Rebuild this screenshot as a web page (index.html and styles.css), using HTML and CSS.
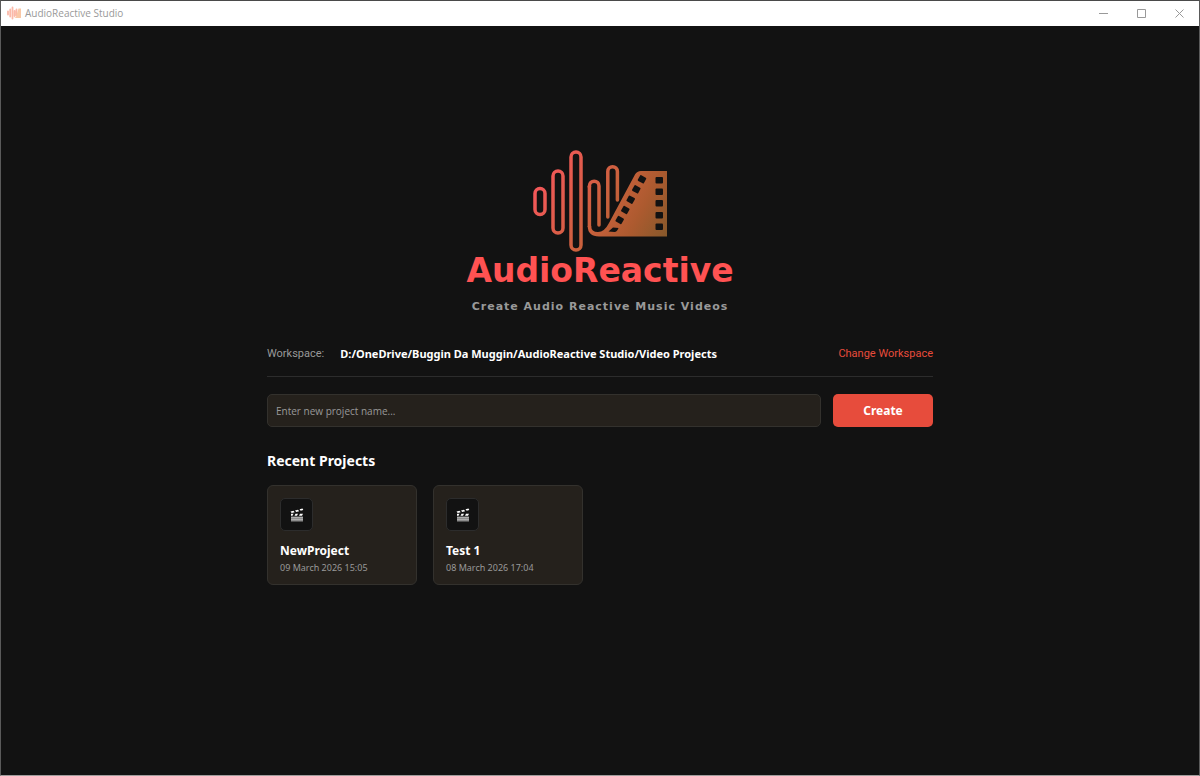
FILE: index.html
```html
<!DOCTYPE html>
<html lang="en">
  <head>
    <meta charset="utf-8" />
    <title>AudioReactive Studio</title>
    <link rel="stylesheet" href="styles.css" />
  </head>
  <body>
    <header class="titlebar">
      <svg class="app-icon" viewBox="0 0 14 14" aria-hidden="true">
        <path d="M1 5.500v3M3.200 3.500v7M5.500 1.500v11M7.600 5v5M9.500 3.500v6" stroke="#fbb9a8" stroke-width="1.800" stroke-linecap="round" />
        <path d="M7 12l2-1 2.500-8.500H14V12z" fill="#f9c8a6" />
      </svg>
      <span class="titlebar-text">AudioReactive Studio</span>
      <div class="window-buttons">
        <button type="button" aria-label="Minimize">
          <svg viewBox="0 0 9 9"><path d="M0 4.500h9" /></svg>
        </button>
        <button type="button" aria-label="Maximize">
          <svg viewBox="0 0 9 9"><path d="M.5 .5h8v8h-8z" /></svg>
        </button>
        <button type="button" aria-label="Close">
          <svg viewBox="0 0 9 9"><path d="M.5 .5l8 8M8.500 .5l-8 8" /></svg>
        </button>
      </div>
    </header>

    <main class="home">
      <div class="brand">
        <svg class="logo" viewBox="0 0 134 102" aria-hidden="true">
          <defs>
            <linearGradient id="flame" gradientUnits="userSpaceOnUse" x1="10" y1="20" x2="134" y2="88">
              <stop offset="0" stop-color="#f5575a" />
              <stop offset="0.5" stop-color="#c9613c" />
              <stop offset="0.75" stop-color="#ac5a2f" />
              <stop offset="1" stop-color="#85592b" />
            </linearGradient>
          </defs>
          <!-- sound bars -->
          <g fill="none" stroke="url(#flame)" stroke-width="3.500" stroke-linecap="round">
            <rect x="2" y="38.500" width="10" height="26" rx="5" />
            <rect x="20" y="21" width="10" height="62" rx="5" />
            <rect x="38" y="2" width="10" height="98" rx="5" />
            <path stroke-linecap="butt" d="M56.400 77V36" />
            <path d="M56.400 37V36a4.800 4.800 0 0 1 9.600 0V75" />
            <path d="M74.800 67V21.500a4.800 4.800 0 0 1 9.600 0V50" />
          </g>
          <!-- film strip -->
          <path fill="url(#flame)" d="M54.700 76Q54.700 86.400 66 86.400H134V21H108Q104 21 102 24.500L76 73Q71.500 82 65 82Q58.200 82 58.200 76Z" />
          <g fill="#121212">
            <rect x="122.500" y="27" width="7.500" height="6.500" rx="1" />
            <rect x="122.500" y="38.500" width="7.500" height="6.500" rx="1" />
            <rect x="122.500" y="50" width="7.500" height="6.500" rx="1" />
            <rect x="122.500" y="62" width="7.500" height="6.500" rx="1" />
            <rect x="122.500" y="73.500" width="7.500" height="6.500" rx="1" />
            <rect x="-3.500" y="-3.200" width="7" height="6.400" rx="1" transform="translate(109 29.300) rotate(29)" />
            <rect x="-3.500" y="-3.200" width="7" height="6.400" rx="1" transform="translate(103.300 39.300) rotate(29)" />
            <rect x="-3.500" y="-3.200" width="7" height="6.400" rx="1" transform="translate(97.700 49.700) rotate(29)" />
            <rect x="-3.500" y="-3.200" width="7" height="6.400" rx="1" transform="translate(92.300 60) rotate(29)" />
            <rect x="-3.500" y="-3.200" width="7" height="6.400" rx="1" transform="translate(86.700 70) rotate(29)" />
            <path d="M75.500 81.500L80 77.500L85.500 78Q84 82 81.500 82Z" />
          </g>
        </svg>
        <h1>AudioReactive</h1>
        <p class="tagline">Create Audio Reactive Music Videos</p>
      </div>

      <div class="workspace">
        <span class="workspace-label">Workspace:</span>
        <strong class="workspace-path">D:/OneDrive/Buggin Da Muggin/AudioReactive Studio/Video Projects</strong>
        <a href="#" class="change-link">Change Workspace</a>
      </div>

      <form class="new-project">
        <input type="text" name="project" placeholder="Enter new project name..." aria-label="Project name" />
        <button type="submit">Create</button>
      </form>

      <section>
        <h2>Recent Projects</h2>
        <div class="projects">
          <a href="#" class="project">
            <span class="project-icon">
              <svg viewBox="0 0 14 14" aria-hidden="true">
                <path d="M.5 3.500l3-.7 1.200 1.500-3 .7zM5 2.400l3-.7L9.200 3.200l-3 .7zM9.500 1.300l3-.8.8 1.500-2.600.7z" fill="#fff" />
                <path d="M1 5.800h2.500l-1 2H1zM5.500 5.800h2.500l-1 2H4.500zM10 5.800h3l-1 2H9z" fill="#fff" />
                <path d="M1 8.500h12V13.500H1z" fill="#8c8c8c" />
                <path d="M1 9.500h12M1 11.500h12" stroke="#b5b5b5" stroke-width=".8" />
              </svg>
            </span>
            <span class="project-name">NewProject</span>
            <span class="project-date">09 March 2026 15:05</span>
          </a>
          <a href="#" class="project">
            <span class="project-icon">
              <svg viewBox="0 0 14 14" aria-hidden="true">
                <path d="M.5 3.500l3-.7 1.200 1.500-3 .7zM5 2.400l3-.7L9.200 3.200l-3 .7zM9.500 1.300l3-.8.8 1.500-2.600.7z" fill="#fff" />
                <path d="M1 5.800h2.500l-1 2H1zM5.500 5.800h2.500l-1 2H4.500zM10 5.800h3l-1 2H9z" fill="#fff" />
                <path d="M1 8.500h12V13.500H1z" fill="#8c8c8c" />
                <path d="M1 9.500h12M1 11.500h12" stroke="#b5b5b5" stroke-width=".8" />
              </svg>
            </span>
            <span class="project-name">Test 1</span>
            <span class="project-date">08 March 2026 17:04</span>
          </a>
        </div>
      </section>
    </main>
  </body>
</html>
```
FILE: styles.css
```css
* {
  box-sizing: border-box;
}

body {
  margin: 0;
  min-height: 100vh;
  border: 1px solid #5a5a5a;
  border-top-color: #4a4a4a;
  border-bottom-color: #a09c9c;
  background: #121212;
  color: #fff;
  font-family: "Noto Sans", sans-serif;
  font-size: 12px;
}

.titlebar {
  display: flex;
  align-items: center;
  height: 25px;
  padding: 0 1px 1px 6px;
  background: #fff;
  color: #999;
}

.app-icon {
  width: 14px;
  height: 14px;
  margin-right: 4px;
  fill: none;
}

.titlebar-text {
  font-family: "Open Sans", sans-serif;
  font-size: 10px;
  line-height: 22px;
}

.window-buttons {
  display: flex;
  margin-left: auto;
}

.window-buttons button {
  display: flex;
  align-items: center;
  justify-content: center;
  width: 38px;
  height: 23px;
  padding: 0;
  border: 0;
  background: none;
}

.window-buttons svg {
  width: 9px;
  height: 9px;
  fill: none;
  stroke: #999;
}

.home {
  max-width: 666px;
  margin: 0 auto;
  padding-top: 124px;
}

.brand {
  text-align: center;
}

.logo {
  display: block;
  width: 134px;
  height: 102px;
  margin: 0 auto;
}

h1 {
  margin: 0;
  color: #ff5252;
  font: bold 33px/38px "DejaVu Sans", sans-serif;
}

.tagline {
  margin: 6px 0 0;
  color: #999;
  font: bold 11px/22px "DejaVu Sans", sans-serif;
  letter-spacing: 1px;
}

.workspace {
  display: flex;
  align-items: center;
  margin-top: 24px;
  padding-bottom: 10px;
  border-bottom: 1px solid #2c2c2c;
  font-size: 11px;
  line-height: 24px;
}

.workspace-label {
  margin-right: 16px;
  color: #999;
  font-family: Roboto, sans-serif;
}

.change-link {
  margin-left: auto;
  color: #e74c3c;
  font-family: Roboto, sans-serif;
  text-decoration: none;
}

.new-project {
  display: flex;
  gap: 12px;
  margin-top: 17px;
}

.new-project input {
  flex: 1;
  height: 33px;
  padding: 0 8px;
  border: 1px solid #33312d;
  border-radius: 5px;
  background: #25211c;
  color: #fff;
  font: 10px "Open Sans", sans-serif;
}

.new-project input::placeholder {
  color: #999;
}

.new-project button {
  width: 100px;
  height: 33px;
  border: 0;
  border-radius: 5px;
  background: #e74c3c;
  color: #fff;
  font: bold 12px "Noto Sans", sans-serif;
}

h2 {
  margin: 24px 0 14px;
  font-size: 14px;
  line-height: 20px;
}

.projects {
  display: flex;
  gap: 16px;
}

.project {
  display: flex;
  flex-direction: column;
  width: 150px;
  padding: 12px 12px 9px;
  border: 1px solid #33312d;
  border-radius: 6px;
  background: #25211c;
  color: #fff;
  text-decoration: none;
}

.project-icon {
  display: flex;
  align-items: center;
  justify-content: center;
  width: 33px;
  height: 33px;
  margin-bottom: 11px;
  border: 1px solid #2c2c2c;
  border-radius: 5px;
  background: #121212;
}

.project-icon svg {
  width: 14px;
  height: 14px;
}

.project-name {
  font-weight: bold;
  line-height: 18px;
}

.project-date {
  color: #999;
  font-size: 9px;
  line-height: 15px;
}
```
